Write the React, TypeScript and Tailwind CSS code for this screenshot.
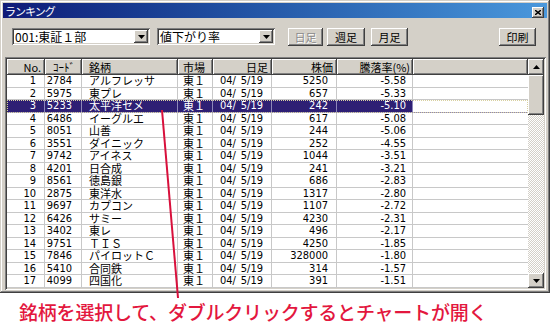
import React from 'react';

const rows = [
  ['1', '2784', 'アルフレッサ', '5250', '-5.58'],
  ['2', '5975', '東プレ', '657', '-5.33'],
  ['3', '5233', '太平洋セメ', '242', '-5.10'],
  ['4', '6486', 'イーグルエ', '617', '-5.08'],
  ['5', '8051', '山善', '244', '-5.06'],
  ['6', '3551', 'ダイニック', '252', '-4.55'],
  ['7', '9742', 'アイネス', '1044', '-3.51'],
  ['8', '4201', '日合成', '241', '-3.21'],
  ['9', '8561', '徳島銀', '686', '-2.83'],
  ['10', '2875', '東洋水', '1317', '-2.80'],
  ['11', '9697', 'カプコン', '1107', '-2.72'],
  ['12', '6426', 'サミー', '4230', '-2.31'],
  ['13', '3402', '東レ', '496', '-2.17'],
  ['14', '9751', 'ＴＩＳ', '4250', '-1.85'],
  ['15', '7846', 'パイロットＣ', '328000', '-1.80'],
  ['16', '5410', '合同鉄', '314', '-1.57'],
  ['17', '4099', '四国化', '391', '-1.51'],
];

const raised =
  'shadow-[inset_-1px_-1px_#404040,inset_1px_1px_#ffffff,inset_-2px_-2px_#808080,inset_2px_2px_#d4d0c8]';
const sunken =
  'shadow-[inset_1px_1px_#808080,inset_-1px_-1px_#ffffff,inset_2px_2px_#404040,inset_-2px_-2px_#d4d0c8]';
const num = "[font-family:'Liberation_Sans_Narrow','DejaVu_Sans_Condensed','Liberation_Sans',sans-serif]";
const jp = "[font-family:'Noto_Sans_CJK_JP',sans-serif]";

const Arrow = ({ up }: { up?: boolean }) => (
  <svg width="7" height="4" viewBox="0 0 7 4">
    <path d={up ? 'M3.5 0L7 4H0Z' : 'M0 0H7L3.5 4Z'} fill="#000" />
  </svg>
);

const Combo = ({ label, w }: { label: string; w: string }) => (
  <div className={`${w} h-[17px] bg-white ${sunken} flex items-center p-[2px]`}>
    <span className={`flex-1 pl-[1px] text-[12px] leading-[13px] text-black ${jp}`}>{label}</span>
    <div className={`w-[14px] h-full bg-[#d4d0c8] ${raised} flex items-center justify-center`}>
      <Arrow />
    </div>
  </div>
);

const Btn = ({ label, w, ml, disabled }: { label: string; w: string; ml: string; disabled?: boolean }) => (
  <div
    className={`${w} ${ml} h-[18px] bg-[#d4d0c8] ${raised} flex items-center justify-center text-[11px] leading-[12px] ${jp} ${
      disabled ? 'text-[#8a8a8a] [text-shadow:1px_1px_#ffffff]' : 'text-black'
    }`}
  >
    {label}
  </div>
);

const cols = ['w-[38px]', 'w-[37px]', 'w-[96px]', 'w-[35px]', 'w-[59px]', 'w-[65px]', 'w-[76px]'];

export default function App() {
  return (
    <div className="relative w-[550px] h-[325px] bg-white overflow-hidden">
      {/* window */}
      <div className="w-[550px] h-[293px] bg-[#d4d0c8] p-[3px] flex flex-col shadow-[inset_-1px_-1px_#404040,inset_1px_1px_#d4d0c8,inset_-2px_-2px_#808080,inset_2px_2px_#ffffff]">
        <div className="h-[15px] bg-gradient-to-r from-[#101a78] to-[#4a98dc] flex items-center pl-[2px] pr-[3px]">
          <span className={`text-white text-[11px] leading-[12px] tracking-[-1px] ${jp}`}>ランキング</span>
          <div className={`ml-auto mt-[4px] w-[12px] h-[11px] bg-[#d4d0c8] ${raised} flex items-center justify-center`}>
            <svg width="6" height="5" viewBox="0 0 6 5">
              <path d="M0 0L6 5M6 0L0 5" stroke="#000" strokeWidth="1.4" />
            </svg>
          </div>
        </div>

        {/* toolbar */}
        <div className="mt-[10px] h-[17px] flex items-center pl-[9px] pr-[11px]">
          <Combo label="001:東証１部" w="w-[138px]" />
          <div className="w-[7px]" />
          <Combo label="値下がり率" w="w-[118px]" />
          <Btn label="日足" w="w-[35px]" ml="ml-[13px]" disabled />
          <Btn label="週足" w="w-[38px]" ml="ml-[4px]" />
          <Btn label="月足" w="w-[37px]" ml="ml-[6px]" />
          <Btn label="印刷" w="w-[37px]" ml="ml-auto" />
        </div>

        {/* list */}
        <div className={`mt-[12px] ml-[2px] w-[541px] flex-1 bg-white ${sunken} p-[2px] flex`}>
          <div className="flex-1 flex flex-col overflow-hidden">
            <div className={`h-[16px] flex text-[11px] leading-[12px] text-black ${jp}`}>
              {['No.', 'ｺｰﾄﾞ', '銘柄', '市場', '日足', '株価', '騰落率(%)'].map((h, i) => (
                <div
                  key={h}
                  className={`${cols[i]} h-full bg-[#d4d0c8] ${raised} flex items-center ${
                    i === 0
                      ? 'justify-end pr-[4px]'
                      : i === 1
                      ? 'pl-[8px]'
                      : i === 2
                      ? 'pl-[7px]'
                      : i === 3
                      ? 'pl-[5px]'
                      : i === 6
                      ? 'justify-end pr-[3px]'
                      : 'justify-end pr-[4px]'
                  }`}
                >
                  {h}
                </div>
              ))}
              <div className={`flex-1 h-full bg-[#d4d0c8] ${raised}`} />
            </div>
            {rows.map((r) => {
              const sel = r[0] === '3';
              const line = sel ? 'border-[#8c86b8]' : 'border-[#c8c8c8]';
              const cell = `border-r ${line} flex items-center`;
              return (
                <div
                  key={r[0]}
                  className={`h-[12.5px] flex border-b ${line} text-[11px] leading-[11px] ${
                    sel ? 'bg-[#2e1f74] text-white outline-1 outline-dotted outline-[#d8d0a0] -outline-offset-1' : 'text-black'
                  }`}
                >
                  <div className={`${cols[0]} ${cell} justify-end pr-[8px] ${num}`}>{r[0]}</div>
                  <div className={`${cols[1]} ${cell} justify-end pr-[9px] ${num}`}>{r[1]}</div>
                  <div className={`${cols[2]} ${cell} pl-[7px] ${jp}`}>{r[2]}</div>
                  <div className={`${cols[3]} ${cell} pl-[5px] ${jp}`}>東１</div>
                  <div className={`${cols[4]} ${cell} justify-end pr-[8px] whitespace-pre ${num}`}>{'04/\u20025/19'}</div>
                  <div className={`${cols[5]} ${cell} justify-end pr-[8px] ${num}`}>{r[3]}</div>
                  <div className={`${cols[6]} ${cell} justify-end pr-[6px] ${num}`}>{r[4]}</div>
                  <div className="flex-1 bg-white" />
                </div>
              );
            })}
          </div>
          {/* scrollbar */}
          <div className="w-[16px] flex flex-col bg-[repeating-conic-gradient(#ffffff_0_25%,#d4d0c8_0_50%)] bg-[length:2px_2px]">
            <div className={`h-[16px] bg-[#d4d0c8] ${raised} flex items-center justify-center`}>
              <Arrow up />
            </div>
            <div className={`h-[40px] bg-[#d4d0c8] ${raised}`} />
            <div className="flex-1" />
            <div className={`h-[15px] bg-[#d4d0c8] ${raised} flex items-center justify-center`}>
              <Arrow />
            </div>
          </div>
        </div>
      </div>

      {/* caption */}
      <div className={`pl-[19px] pt-[7px] text-[19px] leading-[24px] font-medium text-[#e3173e] tracking-[-0.2px] ${jp}`}>
        銘柄を選択して、ダブルクリックするとチャートが開く
      </div>

      <svg className="absolute left-0 top-0 pointer-events-none" width="550" height="325">
        <line x1="162" y1="110" x2="178" y2="298" stroke="#d8103c" strokeWidth="2" />
      </svg>
    </div>
  );
}
